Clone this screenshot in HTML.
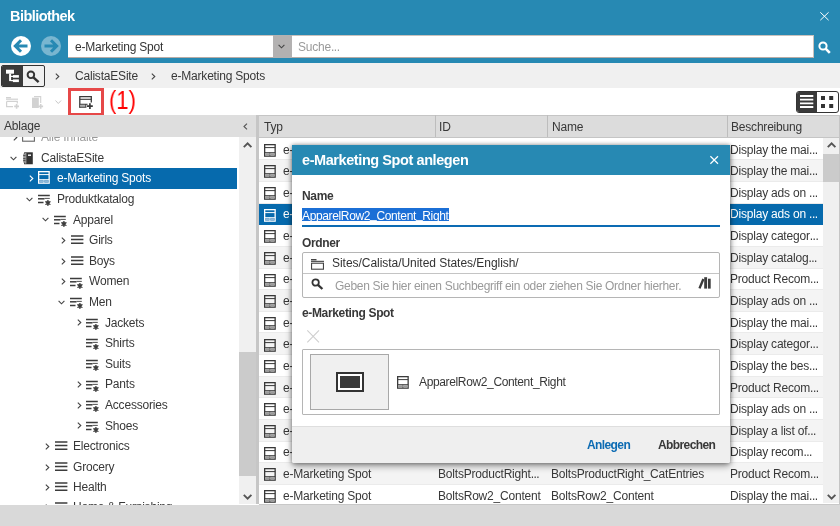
<!DOCTYPE html>
<html><head><meta charset="utf-8">
<style>
*{box-sizing:border-box;margin:0;padding:0}
html,body{width:840px;height:526px;overflow:hidden;background:#fff;font-family:"Liberation Sans",sans-serif;color:#383838;font-size:12px}
.a{position:absolute}
.t{position:absolute;white-space:nowrap;line-height:1;will-change:transform}
svg{position:absolute;overflow:visible}
</style></head><body>
<div class="a" style="left:0px;top:0px;width:840px;height:63px;background:#2789b3;"></div>
<div class="t" style="left:9.7px;top:9.05px;font-size:14.5px;font-weight:bold;color:#fff;letter-spacing:-0.55px;">Bibliothek</div>
<svg style="left:820px;top:12px" width="9" height="9" viewBox="0 0 9 9"><path d="M0.3 0.3L8.6 8.2M8.6 0.3L0.3 8.2" stroke="#fff" stroke-width="1"/></svg>
<svg style="left:11px;top:36px" width="20" height="20" viewBox="0 0 20 20"><circle cx="10" cy="10" r="10" fill="#fff"/><path d="M16.5 10H5M10 4.3L4.3 10L10 15.7" fill="none" stroke="#2789b3" stroke-width="3"/></svg>
<svg style="left:41.3px;top:36px" width="20" height="20" viewBox="0 0 20 20"><circle cx="10" cy="10" r="10" fill="#fff" fill-opacity="0.38"/><path d="M3.5 10H15M10 4.3L15.7 10L10 15.7" fill="none" stroke="#2789b3" stroke-width="3"/></svg>
<div class="a" style="left:68px;top:35.2px;width:205.5px;height:23px;background:#fff;border-top:1px solid #c9c2bd;border-bottom:1px solid #b8aba5"></div>
<div class="t" style="left:75px;top:41.30px;font-size:12px;color:#333;letter-spacing:-0.2px;">e-Marketing Spot</div>
<div class="a" style="left:273.3px;top:35.2px;width:18.5px;height:23px;background:#b3b1b1;"></div>
<svg style="left:278.3px;top:43.6px" width="7" height="5" viewBox="0 0 7 5"><path d="M0.6 0.8L3.5 3.8L6.4 0.8" fill="none" stroke="#444" stroke-width="1.1"/></svg>
<div class="a" style="left:292px;top:35.2px;width:521.6px;height:23px;background:#fff;border-top:1px solid #c9c2bd;border-bottom:1px solid #b8aba5;border-right:1px solid #c9c2bd"></div>
<div class="t" style="left:298px;top:40.90px;font-size:12px;color:#9a9a9a;letter-spacing:-0.2px;">Suche<span style="letter-spacing:-0.5px">...</span></div>
<svg style="left:818px;top:41px" width="13" height="13" viewBox="0 0 13 13"><circle cx="5" cy="5" r="3.6" fill="none" stroke="#fff" stroke-width="2"/><path d="M7.6 7.6L11.8 11.8" stroke="#fff" stroke-width="2.6"/></svg>
<div class="a" style="left:0px;top:63px;width:840px;height:25px;background:#f0f0f0;"></div>
<div class="a" style="left:1px;top:65px;width:43.6px;height:22px;border:1px solid #333;border-radius:2px;background:#f0f0f0;overflow:hidden"><div class="a" style="left:0;top:0;width:20.7px;height:20px;background:#3a3a3a"></div></div>
<svg style="left:0px;top:62px" width="48" height="28" viewBox="0 0 48 28"><rect x="6" y="7.7" width="8" height="4" fill="#fff"/><rect x="9.1" y="11.5" width="2" height="7.6" fill="#fff"/><rect x="11" y="13.8" width="2" height="1.2" fill="#fff"/><rect x="11" y="18" width="2" height="1.2" fill="#fff"/><rect x="12.9" y="13.1" width="6" height="2.6" fill="#fff"/><rect x="12.9" y="17.4" width="6" height="2.7" fill="#fff"/></svg>
<svg style="left:26px;top:69.5px" width="14" height="14" viewBox="0 0 14 14"><circle cx="4.9" cy="4.8" r="3.3" fill="none" stroke="#333" stroke-width="1.9"/><path d="M7.4 7.3L12.6 12.2" stroke="#333" stroke-width="2.4"/></svg>
<svg style="left:55px;top:73px" width="5" height="7" viewBox="0 0 5 7"><path d="M0.8 0.6L3.8 3.5L0.8 6.4" fill="none" stroke="#444" stroke-width="1.1"/></svg>
<div class="t" style="left:75.3px;top:70.00px;font-size:12px;color:#383838;letter-spacing:-0.2px;">CalistaESite</div>
<svg style="left:151px;top:73px" width="5" height="7" viewBox="0 0 5 7"><path d="M0.8 0.6L3.8 3.5L0.8 6.4" fill="none" stroke="#444" stroke-width="1.1"/></svg>
<div class="t" style="left:171px;top:70.00px;font-size:12px;color:#383838;letter-spacing:-0.2px;">e-Marketing Spots</div>
<div class="a" style="left:0px;top:88px;width:840px;height:27px;background:#fff;"></div>
<svg style="left:6px;top:97px" width="14" height="12" viewBox="0 0 14 12"><rect x="0" y="0" width="5" height="1.4" fill="#d2d2d2"/><rect x="0" y="1.6" width="12" height="1.2" fill="#d2d2d2"/><path d="M0.6 4.4H11.3V6.5M7 9.6H0.6V4.4" fill="none" stroke="#d2d2d2" stroke-width="1.2"/><path d="M10.6 7V11.7M8.2 9.35H13" stroke="#d2d2d2" stroke-width="1.6"/></svg>
<svg style="left:32px;top:96px" width="12" height="13" viewBox="0 0 12 13"><path d="M2 0.6H8.7V7" fill="none" stroke="#d2d2d2" stroke-width="1.1"/><rect x="0" y="1.7" width="6.8" height="10.3" fill="#d2d2d2"/><path d="M8.7 8V12.7M6.3 10.35H11.1" stroke="#d2d2d2" stroke-width="1.6"/></svg>
<svg style="left:54.5px;top:100px" width="7" height="5" viewBox="0 0 7 5"><path d="M0.5 0.5L3.3 3.5L6.1 0.5" fill="none" stroke="#c8c8c8" stroke-width="1"/></svg>
<div class="a" style="left:68px;top:88px;width:35.8px;height:27.9px;background:transparent;border:3px solid #e64848"></div>
<svg style="left:76px;top:92px" width="20" height="20" viewBox="0 0 20 20"><path d="M3.8 15.5V4.6H15.3V10.4" fill="none" stroke="#3a3a3a" stroke-width="1.3"/><path d="M3.8 7.3H15.3" stroke="#3a3a3a" stroke-width="1.1"/><rect x="4.4" y="12.6" width="5" height="2.3" fill="#b0b0b0"/><path d="M3.8 12.2H11.6M9.8 12.2V15.6M3.2 15.3H10.4" fill="none" stroke="#3a3a3a" stroke-width="1.1"/><path d="M13.9 11.2V17M11 14.1H16.8" stroke="#3a3a3a" stroke-width="1.7"/></svg>
<div class="t" style="left:108.9px;top:87.60px;font-size:25px;color:#f00;letter-spacing:0px;transform:scaleX(0.88);transform-origin:0 0">(1)</div>
<div class="a" style="left:796.2px;top:91px;width:42.5px;height:21.7px;border:1px solid #333;border-radius:3px;background:#fff;overflow:hidden"><div class="a" style="left:0;top:0;width:20.3px;height:20px;background:#3a3a3a"></div></div>
<svg style="left:800px;top:95.4px" width="14" height="14" viewBox="0 0 14 14"><path d="M0 1H13.3M0 4.6H13.3M0 8.3H13.3M0 12H13.3" stroke="#fff" stroke-width="1.8"/></svg>
<svg style="left:820.8px;top:96px" width="13" height="13" viewBox="0 0 13 13"><rect x="0" y="0" width="4" height="4" fill="#333"/><rect x="8.2" y="0" width="4" height="4" fill="#333"/><rect x="0" y="8" width="4" height="4" fill="#333"/><rect x="8.2" y="8" width="4" height="4" fill="#333"/></svg>
<div class="a" style="left:0;top:115px;width:256px;height:390px;background:#fff;overflow:hidden">
<svg style="left:12.5px;top:19.0px" width="5" height="7" viewBox="0 0 5 7"><path d="M0.8 0.6L3.8 3.5L0.8 6.4" fill="none" stroke="#444" stroke-width="1.1"/></svg>
<svg style="left:22.2px;top:14.1px" width="13" height="13" viewBox="0 0 13 13"><rect x="0.6" y="0.6" width="11.8" height="11.6" fill="none" stroke="#666" stroke-width="1.1"/></svg>
<div class="t" style="left:40.75px;top:16.10px;font-size:12px;color:#9a9a9a;letter-spacing:-0.2px;">Alle Inhalte</div>
<svg style="left:10.1px;top:40.5px" width="7" height="5" viewBox="0 0 7 5"><path d="M0.6 0.8L3.5 3.8L6.4 0.8" fill="none" stroke="#444" stroke-width="1.1"/></svg>
<svg style="left:23px;top:37.2px" width="11" height="13" viewBox="0 0 11 13"><rect x="1.1" y="0.3" width="8.7" height="11.95" fill="#333"/><rect x="2.5" y="1" width="0.7" height="10.6" fill="#fff"/><rect x="0.2" y="1.6" width="2.3" height="9" fill="#999"/><path d="M0.2 6.6H2.5M0.2 8.6H2.5M0.2 3.6H2.5" stroke="#444" stroke-width="0.9"/><rect x="5" y="2.5" width="3" height="1.4" fill="#fff"/></svg>
<div class="t" style="left:40.75px;top:36.70px;font-size:12px;color:#383838;letter-spacing:-0.2px;">CalistaESite</div>
<div class="a" style="left:0px;top:53px;width:237px;height:20.6px;background:#066aad;"></div>
<svg style="left:28.5px;top:60.2px" width="5" height="7" viewBox="0 0 5 7"><path d="M0.8 0.6L3.8 3.5L0.8 6.4" fill="none" stroke="#fff" stroke-width="1.1"/></svg>
<svg style="left:37.8px;top:56.0px" width="13" height="13" viewBox="0 0 13 13"><rect x="0.65" y="0.65" width="10.5" height="11.5" fill="none" stroke="#fff" stroke-width="1.3"/><path d="M0.6 3.6H11.2M0.6 8.7H11.2M5.9 8.7V12" stroke="#fff" stroke-width="1"/><rect x="1.2" y="9.2" width="4.2" height="2.4" fill="#8fb8d8"/><rect x="6.4" y="9.2" width="4.2" height="2.4" fill="#8fb8d8"/></svg>
<div class="t" style="left:56.75px;top:57.30px;font-size:12px;color:#fff;letter-spacing:-0.2px;">e-Marketing Spots</div>
<svg style="left:26.1px;top:81.7px" width="7" height="5" viewBox="0 0 7 5"><path d="M0.6 0.8L3.5 3.8L6.4 0.8" fill="none" stroke="#444" stroke-width="1.1"/></svg>
<svg style="left:37.9px;top:79.1px" width="14" height="12" viewBox="0 0 14 12"><path d="M0 1.5H11.8M0 8.5H5.5" stroke="#3c3c3c" stroke-width="1.4"/><path d="M0 4.8H6.5" stroke="#3c3c3c" stroke-width="1.5"/><path d="M6.5 4.4H11.8" stroke="#3c3c3c" stroke-width="0.9"/><circle cx="9.9" cy="8.9" r="2.3" fill="#777"/><path d="M9.9 5.9V11.9M7.3 7.4L12.5 10.4M7.3 10.4L12.5 7.4" stroke="#3c3c3c" stroke-width="1.1"/><circle cx="9.9" cy="8.9" r="1.3" fill="#3c3c3c"/></svg>
<div class="t" style="left:56.75px;top:77.90px;font-size:12px;color:#383838;letter-spacing:-0.2px;">Produktkatalog</div>
<svg style="left:42.1px;top:102.3px" width="7" height="5" viewBox="0 0 7 5"><path d="M0.6 0.8L3.5 3.8L6.4 0.8" fill="none" stroke="#444" stroke-width="1.1"/></svg>
<svg style="left:53.9px;top:99.7px" width="14" height="12" viewBox="0 0 14 12"><path d="M0 1.5H11.8M0 8.5H5.5" stroke="#3c3c3c" stroke-width="1.4"/><path d="M0 4.8H6.5" stroke="#3c3c3c" stroke-width="1.5"/><path d="M6.5 4.4H11.8" stroke="#3c3c3c" stroke-width="0.9"/><circle cx="9.9" cy="8.9" r="2.3" fill="#777"/><path d="M9.9 5.9V11.9M7.3 7.4L12.5 10.4M7.3 10.4L12.5 7.4" stroke="#3c3c3c" stroke-width="1.1"/><circle cx="9.9" cy="8.9" r="1.3" fill="#3c3c3c"/></svg>
<div class="t" style="left:72.75px;top:98.50px;font-size:12px;color:#383838;letter-spacing:-0.2px;">Apparel</div>
<svg style="left:60.5px;top:122.0px" width="5" height="7" viewBox="0 0 5 7"><path d="M0.8 0.6L3.8 3.5L0.8 6.4" fill="none" stroke="#444" stroke-width="1.1"/></svg>
<svg style="left:70.5px;top:120.2px" width="13" height="9" viewBox="0 0 13 9"><path d="M0 0.9H12.4M0 4.6H12.4M0 8.2H12.4" stroke="#3c3c3c" stroke-width="1.5"/></svg>
<div class="t" style="left:88.75px;top:119.10px;font-size:12px;color:#383838;letter-spacing:-0.2px;">Girls</div>
<svg style="left:60.5px;top:142.6px" width="5" height="7" viewBox="0 0 5 7"><path d="M0.8 0.6L3.8 3.5L0.8 6.4" fill="none" stroke="#444" stroke-width="1.1"/></svg>
<svg style="left:70.5px;top:140.8px" width="13" height="9" viewBox="0 0 13 9"><path d="M0 0.9H12.4M0 4.6H12.4M0 8.2H12.4" stroke="#3c3c3c" stroke-width="1.5"/></svg>
<div class="t" style="left:88.75px;top:139.70px;font-size:12px;color:#383838;letter-spacing:-0.2px;">Boys</div>
<svg style="left:60.5px;top:163.2px" width="5" height="7" viewBox="0 0 5 7"><path d="M0.8 0.6L3.8 3.5L0.8 6.4" fill="none" stroke="#444" stroke-width="1.1"/></svg>
<svg style="left:69.9px;top:161.5px" width="14" height="12" viewBox="0 0 14 12"><path d="M0 1.5H11.8M0 8.5H5.5" stroke="#3c3c3c" stroke-width="1.4"/><path d="M0 4.8H6.5" stroke="#3c3c3c" stroke-width="1.5"/><path d="M6.5 4.4H11.8" stroke="#3c3c3c" stroke-width="0.9"/><circle cx="9.9" cy="8.9" r="2.3" fill="#777"/><path d="M9.9 5.9V11.9M7.3 7.4L12.5 10.4M7.3 10.4L12.5 7.4" stroke="#3c3c3c" stroke-width="1.1"/><circle cx="9.9" cy="8.9" r="1.3" fill="#3c3c3c"/></svg>
<div class="t" style="left:88.75px;top:160.30px;font-size:12px;color:#383838;letter-spacing:-0.2px;">Women</div>
<svg style="left:58.1px;top:184.7px" width="7" height="5" viewBox="0 0 7 5"><path d="M0.6 0.8L3.5 3.8L6.4 0.8" fill="none" stroke="#444" stroke-width="1.1"/></svg>
<svg style="left:69.9px;top:182.1px" width="14" height="12" viewBox="0 0 14 12"><path d="M0 1.5H11.8M0 8.5H5.5" stroke="#3c3c3c" stroke-width="1.4"/><path d="M0 4.8H6.5" stroke="#3c3c3c" stroke-width="1.5"/><path d="M6.5 4.4H11.8" stroke="#3c3c3c" stroke-width="0.9"/><circle cx="9.9" cy="8.9" r="2.3" fill="#777"/><path d="M9.9 5.9V11.9M7.3 7.4L12.5 10.4M7.3 10.4L12.5 7.4" stroke="#3c3c3c" stroke-width="1.1"/><circle cx="9.9" cy="8.9" r="1.3" fill="#3c3c3c"/></svg>
<div class="t" style="left:88.75px;top:180.90px;font-size:12px;color:#383838;letter-spacing:-0.2px;">Men</div>
<svg style="left:76.5px;top:204.4px" width="5" height="7" viewBox="0 0 5 7"><path d="M0.8 0.6L3.8 3.5L0.8 6.4" fill="none" stroke="#444" stroke-width="1.1"/></svg>
<svg style="left:85.9px;top:202.7px" width="14" height="12" viewBox="0 0 14 12"><path d="M0 1.5H11.8M0 8.5H5.5" stroke="#3c3c3c" stroke-width="1.4"/><path d="M0 4.8H6.5" stroke="#3c3c3c" stroke-width="1.5"/><path d="M6.5 4.4H11.8" stroke="#3c3c3c" stroke-width="0.9"/><circle cx="9.9" cy="8.9" r="2.3" fill="#777"/><path d="M9.9 5.9V11.9M7.3 7.4L12.5 10.4M7.3 10.4L12.5 7.4" stroke="#3c3c3c" stroke-width="1.1"/><circle cx="9.9" cy="8.9" r="1.3" fill="#3c3c3c"/></svg>
<div class="t" style="left:104.75px;top:201.50px;font-size:12px;color:#383838;letter-spacing:-0.2px;">Jackets</div>
<svg style="left:85.9px;top:223.3px" width="14" height="12" viewBox="0 0 14 12"><path d="M0 1.5H11.8M0 8.5H5.5" stroke="#3c3c3c" stroke-width="1.4"/><path d="M0 4.8H6.5" stroke="#3c3c3c" stroke-width="1.5"/><path d="M6.5 4.4H11.8" stroke="#3c3c3c" stroke-width="0.9"/><circle cx="9.9" cy="8.9" r="2.3" fill="#777"/><path d="M9.9 5.9V11.9M7.3 7.4L12.5 10.4M7.3 10.4L12.5 7.4" stroke="#3c3c3c" stroke-width="1.1"/><circle cx="9.9" cy="8.9" r="1.3" fill="#3c3c3c"/></svg>
<div class="t" style="left:104.75px;top:222.10px;font-size:12px;color:#383838;letter-spacing:-0.2px;">Shirts</div>
<svg style="left:85.9px;top:243.9px" width="14" height="12" viewBox="0 0 14 12"><path d="M0 1.5H11.8M0 8.5H5.5" stroke="#3c3c3c" stroke-width="1.4"/><path d="M0 4.8H6.5" stroke="#3c3c3c" stroke-width="1.5"/><path d="M6.5 4.4H11.8" stroke="#3c3c3c" stroke-width="0.9"/><circle cx="9.9" cy="8.9" r="2.3" fill="#777"/><path d="M9.9 5.9V11.9M7.3 7.4L12.5 10.4M7.3 10.4L12.5 7.4" stroke="#3c3c3c" stroke-width="1.1"/><circle cx="9.9" cy="8.9" r="1.3" fill="#3c3c3c"/></svg>
<div class="t" style="left:104.75px;top:242.70px;font-size:12px;color:#383838;letter-spacing:-0.2px;">Suits</div>
<svg style="left:76.5px;top:266.2px" width="5" height="7" viewBox="0 0 5 7"><path d="M0.8 0.6L3.8 3.5L0.8 6.4" fill="none" stroke="#444" stroke-width="1.1"/></svg>
<svg style="left:85.9px;top:264.5px" width="14" height="12" viewBox="0 0 14 12"><path d="M0 1.5H11.8M0 8.5H5.5" stroke="#3c3c3c" stroke-width="1.4"/><path d="M0 4.8H6.5" stroke="#3c3c3c" stroke-width="1.5"/><path d="M6.5 4.4H11.8" stroke="#3c3c3c" stroke-width="0.9"/><circle cx="9.9" cy="8.9" r="2.3" fill="#777"/><path d="M9.9 5.9V11.9M7.3 7.4L12.5 10.4M7.3 10.4L12.5 7.4" stroke="#3c3c3c" stroke-width="1.1"/><circle cx="9.9" cy="8.9" r="1.3" fill="#3c3c3c"/></svg>
<div class="t" style="left:104.75px;top:263.30px;font-size:12px;color:#383838;letter-spacing:-0.2px;">Pants</div>
<svg style="left:76.5px;top:286.8px" width="5" height="7" viewBox="0 0 5 7"><path d="M0.8 0.6L3.8 3.5L0.8 6.4" fill="none" stroke="#444" stroke-width="1.1"/></svg>
<svg style="left:85.9px;top:285.1px" width="14" height="12" viewBox="0 0 14 12"><path d="M0 1.5H11.8M0 8.5H5.5" stroke="#3c3c3c" stroke-width="1.4"/><path d="M0 4.8H6.5" stroke="#3c3c3c" stroke-width="1.5"/><path d="M6.5 4.4H11.8" stroke="#3c3c3c" stroke-width="0.9"/><circle cx="9.9" cy="8.9" r="2.3" fill="#777"/><path d="M9.9 5.9V11.9M7.3 7.4L12.5 10.4M7.3 10.4L12.5 7.4" stroke="#3c3c3c" stroke-width="1.1"/><circle cx="9.9" cy="8.9" r="1.3" fill="#3c3c3c"/></svg>
<div class="t" style="left:104.75px;top:283.90px;font-size:12px;color:#383838;letter-spacing:-0.2px;">Accessories</div>
<svg style="left:76.5px;top:307.4px" width="5" height="7" viewBox="0 0 5 7"><path d="M0.8 0.6L3.8 3.5L0.8 6.4" fill="none" stroke="#444" stroke-width="1.1"/></svg>
<svg style="left:85.9px;top:305.7px" width="14" height="12" viewBox="0 0 14 12"><path d="M0 1.5H11.8M0 8.5H5.5" stroke="#3c3c3c" stroke-width="1.4"/><path d="M0 4.8H6.5" stroke="#3c3c3c" stroke-width="1.5"/><path d="M6.5 4.4H11.8" stroke="#3c3c3c" stroke-width="0.9"/><circle cx="9.9" cy="8.9" r="2.3" fill="#777"/><path d="M9.9 5.9V11.9M7.3 7.4L12.5 10.4M7.3 10.4L12.5 7.4" stroke="#3c3c3c" stroke-width="1.1"/><circle cx="9.9" cy="8.9" r="1.3" fill="#3c3c3c"/></svg>
<div class="t" style="left:104.75px;top:304.50px;font-size:12px;color:#383838;letter-spacing:-0.2px;">Shoes</div>
<svg style="left:44.5px;top:328.0px" width="5" height="7" viewBox="0 0 5 7"><path d="M0.8 0.6L3.8 3.5L0.8 6.4" fill="none" stroke="#444" stroke-width="1.1"/></svg>
<svg style="left:54.5px;top:326.2px" width="13" height="9" viewBox="0 0 13 9"><path d="M0 0.9H12.4M0 4.6H12.4M0 8.2H12.4" stroke="#3c3c3c" stroke-width="1.5"/></svg>
<div class="t" style="left:72.75px;top:325.10px;font-size:12px;color:#383838;letter-spacing:-0.2px;">Electronics</div>
<svg style="left:44.5px;top:348.6px" width="5" height="7" viewBox="0 0 5 7"><path d="M0.8 0.6L3.8 3.5L0.8 6.4" fill="none" stroke="#444" stroke-width="1.1"/></svg>
<svg style="left:54.5px;top:346.8px" width="13" height="9" viewBox="0 0 13 9"><path d="M0 0.9H12.4M0 4.6H12.4M0 8.2H12.4" stroke="#3c3c3c" stroke-width="1.5"/></svg>
<div class="t" style="left:72.75px;top:345.70px;font-size:12px;color:#383838;letter-spacing:-0.2px;">Grocery</div>
<svg style="left:44.5px;top:369.2px" width="5" height="7" viewBox="0 0 5 7"><path d="M0.8 0.6L3.8 3.5L0.8 6.4" fill="none" stroke="#444" stroke-width="1.1"/></svg>
<svg style="left:54.5px;top:367.4px" width="13" height="9" viewBox="0 0 13 9"><path d="M0 0.9H12.4M0 4.6H12.4M0 8.2H12.4" stroke="#3c3c3c" stroke-width="1.5"/></svg>
<div class="t" style="left:72.75px;top:366.30px;font-size:12px;color:#383838;letter-spacing:-0.2px;">Health</div>
<svg style="left:44.5px;top:389.0px" width="5" height="7" viewBox="0 0 5 7"><path d="M0.8 0.6L3.8 3.5L0.8 6.4" fill="none" stroke="#444" stroke-width="1.1"/></svg>
<svg style="left:54.5px;top:387.2px" width="13" height="9" viewBox="0 0 13 9"><path d="M0 0.9H12.4M0 4.6H12.4M0 8.2H12.4" stroke="#3c3c3c" stroke-width="1.5"/></svg>
<div class="t" style="left:72.75px;top:386.10px;font-size:12px;color:#383838;letter-spacing:-0.2px;">Home &amp; Furnishing</div>
</div>
<div class="a" style="left:0px;top:115px;width:256px;height:21.5px;background:#dedede;"></div>
<div class="t" style="left:4.2px;top:119.70px;font-size:12px;color:#383838;letter-spacing:-0.2px;">Ablage</div>
<svg style="left:243px;top:123px" width="5" height="7" viewBox="0 0 5 7"><path d="M4 0.6L1 3.5L4 6.4" fill="none" stroke="#555" stroke-width="1.1"/></svg>
<div class="a" style="left:239px;top:136.5px;width:17px;height:367.5px;background:#f0f0f0;"></div>
<div class="a" style="left:239px;top:352.4px;width:17px;height:123.6px;background:#cbcbcb;"></div>
<svg style="left:242.8px;top:142px" width="10" height="6" viewBox="0 0 10 6"><path d="M0.8 5.2L4.6 1.4L8.4 5.2" fill="none" stroke="#555" stroke-width="1.9"/></svg>
<svg style="left:242.8px;top:494px" width="10" height="6" viewBox="0 0 10 6"><path d="M0.8 0.8L4.6 4.6L8.4 0.8" fill="none" stroke="#555" stroke-width="1.9"/></svg>
<div class="a" style="left:256px;top:115px;width:3px;height:389px;background:#c6c6c6;"></div>
<div class="a" style="left:259px;top:115px;width:581px;height:389px;background:#fff;overflow:hidden">
<div class="a" style="left:0px;top:23.7px;width:564px;height:21.638px;background:#fff;border-bottom:1px solid #ebebeb"></div>
<svg style="left:5.100000000000023px;top:28.8px" width="13" height="13" viewBox="0 0 13 13"><rect x="0.65" y="0.65" width="10.5" height="11.5" fill="none" stroke="#383838" stroke-width="1.3"/><path d="M0.6 3.6H11.2M0.6 8.7H11.2M5.9 8.7V12" stroke="#383838" stroke-width="1"/><rect x="1.2" y="9.2" width="4.2" height="2.4" fill="#9a9a9a"/><rect x="6.4" y="9.2" width="4.2" height="2.4" fill="#9a9a9a"/></svg>
<div class="t" style="left:24.19999999999999px;top:28.55px;font-size:12px;color:#383838;letter-spacing:-0.2px;width:9px;overflow:hidden">e-Marketing Spot</div>
<div class="t" style="left:471.4px;top:28.55px;font-size:12px;color:#383838;letter-spacing:-0.2px;">Display the mai<span style="letter-spacing:-0.5px">...</span></div>
<div class="a" style="left:0px;top:45.34px;width:564px;height:21.638px;background:#f4f4f4;border-bottom:1px solid #ebebeb"></div>
<svg style="left:5.100000000000023px;top:50.44px" width="13" height="13" viewBox="0 0 13 13"><rect x="0.65" y="0.65" width="10.5" height="11.5" fill="none" stroke="#383838" stroke-width="1.3"/><path d="M0.6 3.6H11.2M0.6 8.7H11.2M5.9 8.7V12" stroke="#383838" stroke-width="1"/><rect x="1.2" y="9.2" width="4.2" height="2.4" fill="#9a9a9a"/><rect x="6.4" y="9.2" width="4.2" height="2.4" fill="#9a9a9a"/></svg>
<div class="t" style="left:24.19999999999999px;top:50.19px;font-size:12px;color:#383838;letter-spacing:-0.2px;">e-Marketing Spot</div>
<div class="t" style="left:471.4px;top:50.19px;font-size:12px;color:#383838;letter-spacing:-0.2px;">Display the mai<span style="letter-spacing:-0.5px">...</span></div>
<div class="a" style="left:0px;top:66.98px;width:564px;height:21.638px;background:#fff;border-bottom:1px solid #ebebeb"></div>
<svg style="left:5.100000000000023px;top:72.08px" width="13" height="13" viewBox="0 0 13 13"><rect x="0.65" y="0.65" width="10.5" height="11.5" fill="none" stroke="#383838" stroke-width="1.3"/><path d="M0.6 3.6H11.2M0.6 8.7H11.2M5.9 8.7V12" stroke="#383838" stroke-width="1"/><rect x="1.2" y="9.2" width="4.2" height="2.4" fill="#9a9a9a"/><rect x="6.4" y="9.2" width="4.2" height="2.4" fill="#9a9a9a"/></svg>
<div class="t" style="left:24.19999999999999px;top:71.83px;font-size:12px;color:#383838;letter-spacing:-0.2px;">e-Marketing Spot</div>
<div class="t" style="left:471.4px;top:71.83px;font-size:12px;color:#383838;letter-spacing:-0.2px;">Display ads on <span style="letter-spacing:-0.5px">...</span></div>
<div class="a" style="left:0px;top:88.61px;width:564px;height:21.638px;background:#066aad;border-bottom:1px solid #066aad"></div>
<svg style="left:5.100000000000023px;top:93.71px" width="13" height="13" viewBox="0 0 13 13"><rect x="0.65" y="0.65" width="10.5" height="11.5" fill="none" stroke="#fff" stroke-width="1.3"/><path d="M0.6 3.6H11.2M0.6 8.7H11.2M5.9 8.7V12" stroke="#fff" stroke-width="1"/><rect x="1.2" y="9.2" width="4.2" height="2.4" fill="#8fb8d8"/><rect x="6.4" y="9.2" width="4.2" height="2.4" fill="#8fb8d8"/></svg>
<div class="t" style="left:24.19999999999999px;top:93.46px;font-size:12px;color:#fff;letter-spacing:-0.2px;">e-Marketing Spot</div>
<div class="t" style="left:471.4px;top:93.46px;font-size:12px;color:#fff;letter-spacing:-0.2px;">Display ads on <span style="letter-spacing:-0.5px">...</span></div>
<div class="a" style="left:0px;top:110.25px;width:564px;height:21.638px;background:#fff;border-bottom:1px solid #ebebeb"></div>
<svg style="left:5.100000000000023px;top:115.35px" width="13" height="13" viewBox="0 0 13 13"><rect x="0.65" y="0.65" width="10.5" height="11.5" fill="none" stroke="#383838" stroke-width="1.3"/><path d="M0.6 3.6H11.2M0.6 8.7H11.2M5.9 8.7V12" stroke="#383838" stroke-width="1"/><rect x="1.2" y="9.2" width="4.2" height="2.4" fill="#9a9a9a"/><rect x="6.4" y="9.2" width="4.2" height="2.4" fill="#9a9a9a"/></svg>
<div class="t" style="left:24.19999999999999px;top:115.10px;font-size:12px;color:#383838;letter-spacing:-0.2px;">e-Marketing Spot</div>
<div class="t" style="left:471.4px;top:115.10px;font-size:12px;color:#383838;letter-spacing:-0.2px;">Display categor<span style="letter-spacing:-0.5px">...</span></div>
<div class="a" style="left:0px;top:131.89px;width:564px;height:21.638px;background:#f4f4f4;border-bottom:1px solid #ebebeb"></div>
<svg style="left:5.100000000000023px;top:136.99px" width="13" height="13" viewBox="0 0 13 13"><rect x="0.65" y="0.65" width="10.5" height="11.5" fill="none" stroke="#383838" stroke-width="1.3"/><path d="M0.6 3.6H11.2M0.6 8.7H11.2M5.9 8.7V12" stroke="#383838" stroke-width="1"/><rect x="1.2" y="9.2" width="4.2" height="2.4" fill="#9a9a9a"/><rect x="6.4" y="9.2" width="4.2" height="2.4" fill="#9a9a9a"/></svg>
<div class="t" style="left:24.19999999999999px;top:136.74px;font-size:12px;color:#383838;letter-spacing:-0.2px;">e-Marketing Spot</div>
<div class="t" style="left:471.4px;top:136.74px;font-size:12px;color:#383838;letter-spacing:-0.2px;">Display catalog<span style="letter-spacing:-0.5px">...</span></div>
<div class="a" style="left:0px;top:153.53px;width:564px;height:21.638px;background:#fff;border-bottom:1px solid #ebebeb"></div>
<svg style="left:5.100000000000023px;top:158.63px" width="13" height="13" viewBox="0 0 13 13"><rect x="0.65" y="0.65" width="10.5" height="11.5" fill="none" stroke="#383838" stroke-width="1.3"/><path d="M0.6 3.6H11.2M0.6 8.7H11.2M5.9 8.7V12" stroke="#383838" stroke-width="1"/><rect x="1.2" y="9.2" width="4.2" height="2.4" fill="#9a9a9a"/><rect x="6.4" y="9.2" width="4.2" height="2.4" fill="#9a9a9a"/></svg>
<div class="t" style="left:24.19999999999999px;top:158.38px;font-size:12px;color:#383838;letter-spacing:-0.2px;">e-Marketing Spot</div>
<div class="t" style="left:471.4px;top:158.38px;font-size:12px;color:#383838;letter-spacing:-0.2px;">Product Recom<span style="letter-spacing:-0.5px">...</span></div>
<div class="a" style="left:0px;top:175.17px;width:564px;height:21.638px;background:#f4f4f4;border-bottom:1px solid #ebebeb"></div>
<svg style="left:5.100000000000023px;top:180.27px" width="13" height="13" viewBox="0 0 13 13"><rect x="0.65" y="0.65" width="10.5" height="11.5" fill="none" stroke="#383838" stroke-width="1.3"/><path d="M0.6 3.6H11.2M0.6 8.7H11.2M5.9 8.7V12" stroke="#383838" stroke-width="1"/><rect x="1.2" y="9.2" width="4.2" height="2.4" fill="#9a9a9a"/><rect x="6.4" y="9.2" width="4.2" height="2.4" fill="#9a9a9a"/></svg>
<div class="t" style="left:24.19999999999999px;top:180.02px;font-size:12px;color:#383838;letter-spacing:-0.2px;">e-Marketing Spot</div>
<div class="t" style="left:471.4px;top:180.02px;font-size:12px;color:#383838;letter-spacing:-0.2px;">Display ads on <span style="letter-spacing:-0.5px">...</span></div>
<div class="a" style="left:0px;top:196.8px;width:564px;height:21.638px;background:#fff;border-bottom:1px solid #ebebeb"></div>
<svg style="left:5.100000000000023px;top:201.9px" width="13" height="13" viewBox="0 0 13 13"><rect x="0.65" y="0.65" width="10.5" height="11.5" fill="none" stroke="#383838" stroke-width="1.3"/><path d="M0.6 3.6H11.2M0.6 8.7H11.2M5.9 8.7V12" stroke="#383838" stroke-width="1"/><rect x="1.2" y="9.2" width="4.2" height="2.4" fill="#9a9a9a"/><rect x="6.4" y="9.2" width="4.2" height="2.4" fill="#9a9a9a"/></svg>
<div class="t" style="left:24.19999999999999px;top:201.65px;font-size:12px;color:#383838;letter-spacing:-0.2px;">e-Marketing Spot</div>
<div class="t" style="left:471.4px;top:201.65px;font-size:12px;color:#383838;letter-spacing:-0.2px;">Display the mai<span style="letter-spacing:-0.5px">...</span></div>
<div class="a" style="left:0px;top:218.44px;width:564px;height:21.638px;background:#f4f4f4;border-bottom:1px solid #ebebeb"></div>
<svg style="left:5.100000000000023px;top:223.54px" width="13" height="13" viewBox="0 0 13 13"><rect x="0.65" y="0.65" width="10.5" height="11.5" fill="none" stroke="#383838" stroke-width="1.3"/><path d="M0.6 3.6H11.2M0.6 8.7H11.2M5.9 8.7V12" stroke="#383838" stroke-width="1"/><rect x="1.2" y="9.2" width="4.2" height="2.4" fill="#9a9a9a"/><rect x="6.4" y="9.2" width="4.2" height="2.4" fill="#9a9a9a"/></svg>
<div class="t" style="left:24.19999999999999px;top:223.29px;font-size:12px;color:#383838;letter-spacing:-0.2px;">e-Marketing Spot</div>
<div class="t" style="left:471.4px;top:223.29px;font-size:12px;color:#383838;letter-spacing:-0.2px;">Display categor<span style="letter-spacing:-0.5px">...</span></div>
<div class="a" style="left:0px;top:240.08px;width:564px;height:21.638px;background:#fff;border-bottom:1px solid #ebebeb"></div>
<svg style="left:5.100000000000023px;top:245.18px" width="13" height="13" viewBox="0 0 13 13"><rect x="0.65" y="0.65" width="10.5" height="11.5" fill="none" stroke="#383838" stroke-width="1.3"/><path d="M0.6 3.6H11.2M0.6 8.7H11.2M5.9 8.7V12" stroke="#383838" stroke-width="1"/><rect x="1.2" y="9.2" width="4.2" height="2.4" fill="#9a9a9a"/><rect x="6.4" y="9.2" width="4.2" height="2.4" fill="#9a9a9a"/></svg>
<div class="t" style="left:24.19999999999999px;top:244.93px;font-size:12px;color:#383838;letter-spacing:-0.2px;">e-Marketing Spot</div>
<div class="t" style="left:471.4px;top:244.93px;font-size:12px;color:#383838;letter-spacing:-0.2px;">Display the bes<span style="letter-spacing:-0.5px">...</span></div>
<div class="a" style="left:0px;top:261.72px;width:564px;height:21.638px;background:#f4f4f4;border-bottom:1px solid #ebebeb"></div>
<svg style="left:5.100000000000023px;top:266.82px" width="13" height="13" viewBox="0 0 13 13"><rect x="0.65" y="0.65" width="10.5" height="11.5" fill="none" stroke="#383838" stroke-width="1.3"/><path d="M0.6 3.6H11.2M0.6 8.7H11.2M5.9 8.7V12" stroke="#383838" stroke-width="1"/><rect x="1.2" y="9.2" width="4.2" height="2.4" fill="#9a9a9a"/><rect x="6.4" y="9.2" width="4.2" height="2.4" fill="#9a9a9a"/></svg>
<div class="t" style="left:24.19999999999999px;top:266.57px;font-size:12px;color:#383838;letter-spacing:-0.2px;">e-Marketing Spot</div>
<div class="t" style="left:471.4px;top:266.57px;font-size:12px;color:#383838;letter-spacing:-0.2px;">Product Recom<span style="letter-spacing:-0.5px">...</span></div>
<div class="a" style="left:0px;top:283.36px;width:564px;height:21.638px;background:#fff;border-bottom:1px solid #ebebeb"></div>
<svg style="left:5.100000000000023px;top:288.46px" width="13" height="13" viewBox="0 0 13 13"><rect x="0.65" y="0.65" width="10.5" height="11.5" fill="none" stroke="#383838" stroke-width="1.3"/><path d="M0.6 3.6H11.2M0.6 8.7H11.2M5.9 8.7V12" stroke="#383838" stroke-width="1"/><rect x="1.2" y="9.2" width="4.2" height="2.4" fill="#9a9a9a"/><rect x="6.4" y="9.2" width="4.2" height="2.4" fill="#9a9a9a"/></svg>
<div class="t" style="left:24.19999999999999px;top:288.21px;font-size:12px;color:#383838;letter-spacing:-0.2px;">e-Marketing Spot</div>
<div class="t" style="left:471.4px;top:288.21px;font-size:12px;color:#383838;letter-spacing:-0.2px;">Display ads on <span style="letter-spacing:-0.5px">...</span></div>
<div class="a" style="left:0px;top:304.99px;width:564px;height:21.638px;background:#f4f4f4;border-bottom:1px solid #ebebeb"></div>
<svg style="left:5.100000000000023px;top:310.09px" width="13" height="13" viewBox="0 0 13 13"><rect x="0.65" y="0.65" width="10.5" height="11.5" fill="none" stroke="#383838" stroke-width="1.3"/><path d="M0.6 3.6H11.2M0.6 8.7H11.2M5.9 8.7V12" stroke="#383838" stroke-width="1"/><rect x="1.2" y="9.2" width="4.2" height="2.4" fill="#9a9a9a"/><rect x="6.4" y="9.2" width="4.2" height="2.4" fill="#9a9a9a"/></svg>
<div class="t" style="left:24.19999999999999px;top:309.84px;font-size:12px;color:#383838;letter-spacing:-0.2px;">e-Marketing Spot</div>
<div class="t" style="left:471.4px;top:309.84px;font-size:12px;color:#383838;letter-spacing:-0.2px;">Display a list of<span style="letter-spacing:-0.5px">...</span></div>
<div class="a" style="left:0px;top:326.63px;width:564px;height:21.638px;background:#fff;border-bottom:1px solid #ebebeb"></div>
<svg style="left:5.100000000000023px;top:331.73px" width="13" height="13" viewBox="0 0 13 13"><rect x="0.65" y="0.65" width="10.5" height="11.5" fill="none" stroke="#383838" stroke-width="1.3"/><path d="M0.6 3.6H11.2M0.6 8.7H11.2M5.9 8.7V12" stroke="#383838" stroke-width="1"/><rect x="1.2" y="9.2" width="4.2" height="2.4" fill="#9a9a9a"/><rect x="6.4" y="9.2" width="4.2" height="2.4" fill="#9a9a9a"/></svg>
<div class="t" style="left:24.19999999999999px;top:331.48px;font-size:12px;color:#383838;letter-spacing:-0.2px;">e-Marketing Spot</div>
<div class="t" style="left:471.4px;top:331.48px;font-size:12px;color:#383838;letter-spacing:-0.2px;">Display recom<span style="letter-spacing:-0.5px">...</span></div>
<div class="a" style="left:0px;top:348.27px;width:564px;height:21.638px;background:#f4f4f4;border-bottom:1px solid #ebebeb"></div>
<svg style="left:5.100000000000023px;top:353.37px" width="13" height="13" viewBox="0 0 13 13"><rect x="0.65" y="0.65" width="10.5" height="11.5" fill="none" stroke="#383838" stroke-width="1.3"/><path d="M0.6 3.6H11.2M0.6 8.7H11.2M5.9 8.7V12" stroke="#383838" stroke-width="1"/><rect x="1.2" y="9.2" width="4.2" height="2.4" fill="#9a9a9a"/><rect x="6.4" y="9.2" width="4.2" height="2.4" fill="#9a9a9a"/></svg>
<div class="t" style="left:24.19999999999999px;top:353.12px;font-size:12px;color:#383838;letter-spacing:-0.2px;">e-Marketing Spot</div>
<div class="t" style="left:179.39999999999998px;top:353.12px;font-size:12px;color:#383838;letter-spacing:-0.2px;">BoltsProductRight<span style="letter-spacing:-0.5px">...</span></div>
<div class="t" style="left:291.6px;top:353.12px;font-size:12px;color:#383838;letter-spacing:-0.2px;">BoltsProductRight_CatEntries</div>
<div class="t" style="left:471.4px;top:353.12px;font-size:12px;color:#383838;letter-spacing:-0.2px;">Product Recom<span style="letter-spacing:-0.5px">...</span></div>
<div class="a" style="left:0px;top:369.91px;width:564px;height:21.638px;background:#fff;border-bottom:1px solid #ebebeb"></div>
<svg style="left:5.100000000000023px;top:375.01px" width="13" height="13" viewBox="0 0 13 13"><rect x="0.65" y="0.65" width="10.5" height="11.5" fill="none" stroke="#383838" stroke-width="1.3"/><path d="M0.6 3.6H11.2M0.6 8.7H11.2M5.9 8.7V12" stroke="#383838" stroke-width="1"/><rect x="1.2" y="9.2" width="4.2" height="2.4" fill="#9a9a9a"/><rect x="6.4" y="9.2" width="4.2" height="2.4" fill="#9a9a9a"/></svg>
<div class="t" style="left:24.19999999999999px;top:374.76px;font-size:12px;color:#383838;letter-spacing:-0.2px;">e-Marketing Spot</div>
<div class="t" style="left:179.39999999999998px;top:374.76px;font-size:12px;color:#383838;letter-spacing:-0.2px;">BoltsRow2_Content</div>
<div class="t" style="left:291.6px;top:374.76px;font-size:12px;color:#383838;letter-spacing:-0.2px;">BoltsRow2_Content</div>
<div class="t" style="left:471.4px;top:374.76px;font-size:12px;color:#383838;letter-spacing:-0.2px;">Display the mai<span style="letter-spacing:-0.5px">...</span></div>
</div>
<div class="a" style="left:259px;top:115px;width:581px;height:22.5px;background:#dcdcdc;border-top:1px solid #c5c5c5;border-bottom:1px solid #c5c5c5"></div>
<div class="a" style="left:435.2px;top:115px;width:1px;height:22px;background:#bdbdbd;"></div>
<div class="a" style="left:547.2px;top:115px;width:1px;height:22px;background:#bdbdbd;"></div>
<div class="a" style="left:726.7px;top:115px;width:1px;height:22px;background:#bdbdbd;"></div>
<div class="t" style="left:263.9px;top:120.90px;font-size:12px;color:#383838;letter-spacing:-0.2px;">Typ</div>
<div class="t" style="left:439.2px;top:120.90px;font-size:12px;color:#383838;letter-spacing:-0.2px;">ID</div>
<div class="t" style="left:552px;top:120.90px;font-size:12px;color:#383838;letter-spacing:-0.2px;">Name</div>
<div class="t" style="left:730.5px;top:120.90px;font-size:12px;color:#383838;letter-spacing:-0.2px;">Beschreibung</div>
<div class="a" style="left:839px;top:115px;width:1px;height:389px;background:#c5c5c5;"></div>
<div class="a" style="left:823.2px;top:137.5px;width:16px;height:365px;background:#f0f0f0;"></div>
<div class="a" style="left:823.2px;top:154.4px;width:16px;height:27.2px;background:#cbcbcb;"></div>
<svg style="left:826.5px;top:142px" width="10" height="6" viewBox="0 0 10 6"><path d="M0.8 5.2L4.6 1.4L8.4 5.2" fill="none" stroke="#555" stroke-width="1.9"/></svg>
<svg style="left:826.5px;top:494px" width="10" height="6" viewBox="0 0 10 6"><path d="M0.8 0.8L4.6 4.6L8.4 0.8" fill="none" stroke="#555" stroke-width="1.9"/></svg>
<div class="a" style="left:259px;top:503.9px;width:581px;height:1px;background:#c8c8c8;"></div>
<div class="a" style="left:0px;top:504.9px;width:840px;height:21.1px;background:#d9d9d9;"></div>
<div class="a" style="left:291.8px;top:145.2px;width:438.2px;height:317.5px;background:#fff;box-shadow:0 3px 7px rgba(0,0,0,0.4),0 0 4px rgba(0,0,0,0.38);border-radius:0 0 2px 2px;overflow:hidden">
<div class="a" style="left:0px;top:0px;width:438.2px;height:29.8px;background:#2789b3;"></div>
<div class="a" style="left:0px;top:281.3px;width:438.2px;height:37px;background:#efefef;border-top:1px solid #dedede"></div>
</div>
<div class="t" style="left:302.4px;top:153.15px;font-size:14.5px;font-weight:bold;color:#fff;letter-spacing:-0.42px;">e-Marketing Spot anlegen</div>
<svg style="left:710px;top:156.2px" width="9" height="8" viewBox="0 0 9 8"><path d="M0.4 0.3L8 7.7M8 0.3L0.4 7.7" stroke="#fff" stroke-width="1.2"/></svg>
<div class="t" style="left:301.8px;top:189.60px;font-size:12px;font-weight:bold;color:#383838;letter-spacing:-0.35px;">Name</div>
<div class="a" style="left:302.4px;top:208.2px;width:146.6px;height:13.3px;background:#1b6fd6;"></div>
<div class="t" style="left:302.4px;top:209.50px;font-size:12px;color:#fff;letter-spacing:-0.36px;">ApparelRow2<span style="position:relative;top:-2px">_</span>Content<span style="position:relative;top:-2px">_</span>Right</div>
<div class="a" style="left:302.4px;top:224.9px;width:417.4px;height:2px;background:#0c6bb3;"></div>
<div class="t" style="left:302.4px;top:237.10px;font-size:12px;font-weight:bold;color:#383838;letter-spacing:-0.35px;">Ordner</div>
<div class="a" style="left:302.3px;top:252.4px;width:417.6px;height:45.2px;background:transparent;border:1px solid #b5b5b5;border-radius:2px"></div>
<div class="a" style="left:303px;top:272.8px;width:416px;height:1px;background:#c4c4c4;"></div>
<svg style="left:311px;top:258.6px" width="14" height="11" viewBox="0 0 14 11"><rect x="0" y="0" width="5.5" height="1.4" fill="#444"/><rect x="0" y="1.8" width="13" height="1.1" fill="#444"/><rect x="0.55" y="4.2" width="11.9" height="6" fill="none" stroke="#444" stroke-width="1.1"/></svg>
<div class="t" style="left:331.5px;top:257.00px;font-size:12px;color:#333;letter-spacing:-0.04px;">Sites/Calista/United States/English/</div>
<svg style="left:311px;top:278px" width="13" height="12" viewBox="0 0 13 12"><circle cx="4.6" cy="4.5" r="3.2" fill="none" stroke="#333" stroke-width="1.8"/><path d="M6.9 6.9L11.4 11" stroke="#333" stroke-width="2.3"/></svg>
<div class="t" style="left:335.3px;top:280.00px;font-size:12px;color:#9a9a9a;letter-spacing:-0.3px;">Geben Sie hier einen Suchbegriff ein oder ziehen Sie Ordner hierher.</div>
<svg style="left:698px;top:277px" width="14" height="13" viewBox="0 0 14 13"><path d="M1.5 11.4L5.4 2" stroke="#3c3c3c" stroke-width="2.4"/><rect x="6.2" y="0.2" width="2.9" height="11.4" fill="#3c3c3c"/><rect x="10" y="1.7" width="2.7" height="9.9" fill="#3c3c3c"/></svg>
<div class="t" style="left:302.4px;top:306.50px;font-size:12px;font-weight:bold;color:#383838;letter-spacing:-0.35px;">e-Marketing Spot</div>
<svg style="left:306.8px;top:329.8px" width="13" height="13" viewBox="0 0 13 13"><path d="M0.3 0.3L12 12.3M12 0.3L0.3 12.3" stroke="#cfcfcf" stroke-width="1.1"/></svg>
<div class="a" style="left:302.2px;top:349.1px;width:417.6px;height:65.9px;background:transparent;border:1px solid #b5b5b5;border-radius:1px"></div>
<div class="a" style="left:310.3px;top:354.3px;width:78.4px;height:55.6px;background:#f0f0f0;border:1px solid #a8a8a8"></div>
<div class="a" style="left:335.6px;top:371.9px;width:28.6px;height:20px;background:#fff;border:2.2px solid #333"></div>
<div class="a" style="left:339.9px;top:375.7px;width:20.4px;height:12.3px;background:#3a3a3a;"></div>
<svg style="left:397.3px;top:375.6px" width="13" height="13" viewBox="0 0 13 13"><rect x="0.65" y="0.65" width="10.5" height="11.5" fill="none" stroke="#3c3c3c" stroke-width="1.3"/><path d="M0.6 3.6H11.2M0.6 8.7H11.2M5.9 8.7V12" stroke="#3c3c3c" stroke-width="1"/><rect x="1.2" y="9.2" width="4.2" height="2.4" fill="#9a9a9a"/><rect x="6.4" y="9.2" width="4.2" height="2.4" fill="#9a9a9a"/></svg>
<div class="t" style="left:419.2px;top:376.00px;font-size:12px;color:#383838;letter-spacing:-0.36px;">ApparelRow2_Content_Right</div>
<div class="t" style="left:587px;top:439.00px;font-size:12px;font-weight:bold;color:#0c6bb3;letter-spacing:-0.6px;">Anlegen</div>
<div class="t" style="left:657.7px;top:439.00px;font-size:12px;font-weight:bold;color:#383838;letter-spacing:-0.6px;">Abbrechen</div>
</body></html>
